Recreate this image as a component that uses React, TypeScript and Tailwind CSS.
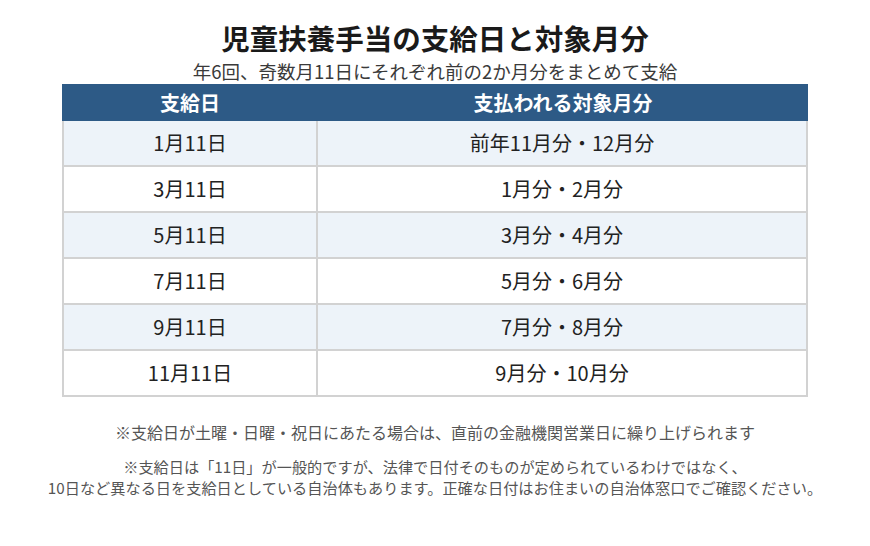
const rows = [
  { day: "1月11日", months: "前年11月分・12月分" },
  { day: "3月11日", months: "1月分・2月分" },
  { day: "5月11日", months: "3月分・4月分" },
  { day: "7月11日", months: "5月分・6月分" },
  { day: "9月11日", months: "7月分・8月分" },
  { day: "11月11日", months: "9月分・10月分" },
];

const App = () => {
  return (
    <div
      className="w-[870px] h-[546px] bg-white flex flex-col items-center pt-[20px]"
      style={{ fontFamily: '"Noto Sans CJK JP", "Noto Sans", sans-serif' }}
    >
      <h1 className="text-[28.5px] leading-[35px] font-bold text-[#1a1a1a]">
        児童扶養手当の支給日と対象月分
      </h1>
      <p className="mt-[4px] text-[18.5px] leading-[24px] text-[#3a3a3a]">
        年6回、奇数月11日にそれぞれ前の2か月分をまとめて支給
      </p>

      <div className="w-[746px] mt-[1px]">
        <div className="grid grid-cols-[256px_1fr] h-[37px] bg-[#2d5a86] text-white font-bold text-[20px]">
          <div className="flex items-center justify-center">支給日</div>
          <div className="flex items-center justify-center">支払われる対象月分</div>
        </div>
        <div className="border-x-2 border-[#d2d2d2]">
          {rows.map((r, i) => (
            <div
              key={r.day}
              className={`grid grid-cols-[254px_1fr] h-[46px] border-b-2 border-[#d2d2d2] text-[20px] text-[#222] ${
                i % 2 === 0 ? "bg-[#edf3f9]" : "bg-white"
              }`}
            >
              <div className="flex items-center justify-center border-r-2 border-[#d2d2d2]">{r.day}</div>
              <div className="flex items-center justify-center">{r.months}</div>
            </div>
          ))}
        </div>
      </div>

      <p className="mt-[24px] text-[16px] leading-[22px] text-[#555]">
        ※支給日が土曜・日曜・祝日にあたる場合は、直前の金融機関営業日に繰り上げられます
      </p>
      <p className="mt-[13px] text-[15.2px] leading-[21px] text-[#555] text-center">
        ※支給日は「11日」が一般的ですが、法律で日付そのものが定められているわけではなく、
        <br />
        10日など異なる日を支給日としている自治体もあります。正確な日付はお住まいの自治体窓口でご確認ください。
      </p>
    </div>
  );
};

export default App;
